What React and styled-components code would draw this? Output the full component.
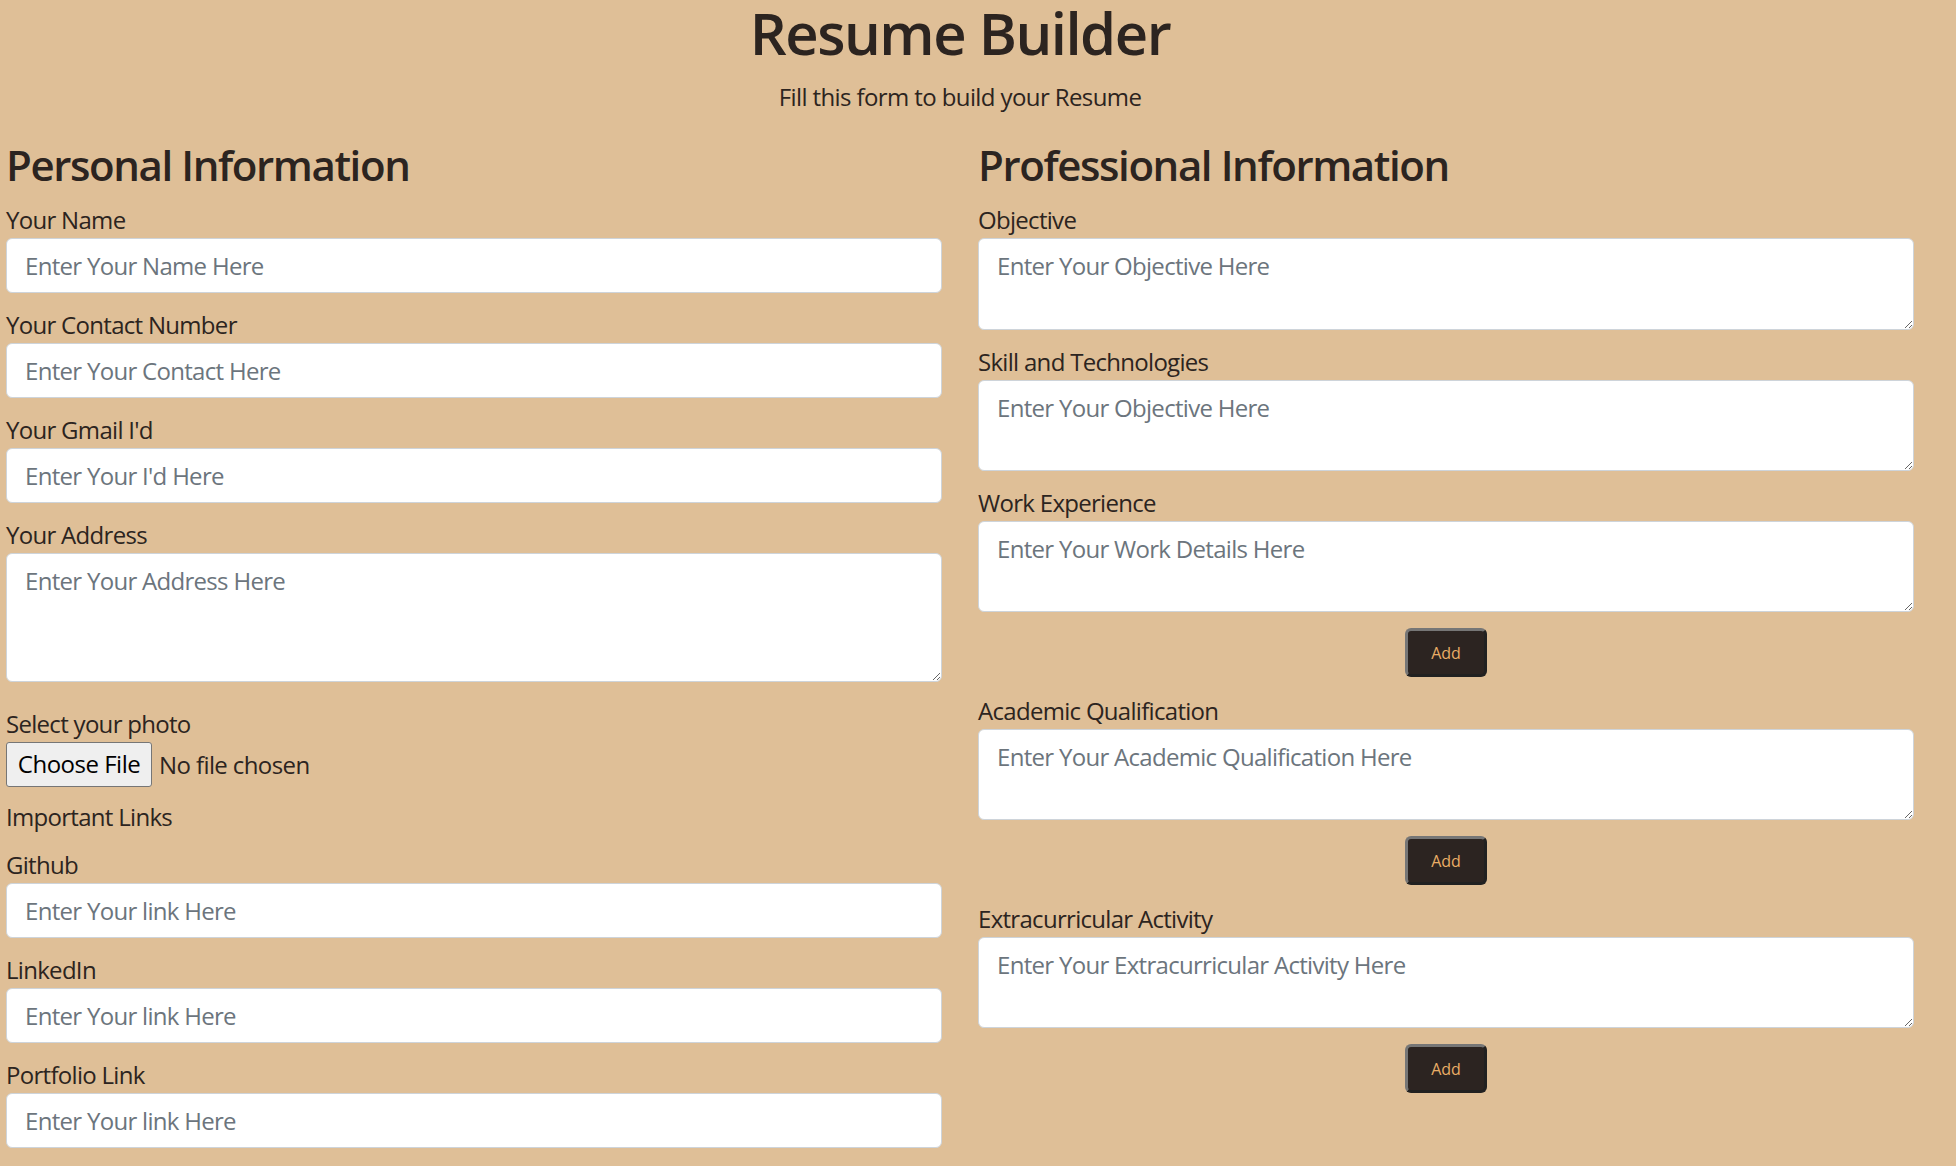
import React from 'react';
import styled, { createGlobalStyle } from 'styled-components';

const GlobalStyle = createGlobalStyle`
  body {
    margin: 0;
    background-color: #dfbf97;
    font-family: "Open Sans", "Noto Sans", sans-serif;
    color: #2c2420;
  }
  * {
    box-sizing: border-box;
  }
`;

const Page = styled.div`
  padding: 0 42px 20px 6px;
  min-height: 1166px;
`;

const Header = styled.header`
  text-align: center;
`;

const Title = styled.h1`
  margin: 0;
  font-size: 58px;
  font-weight: 600;
  line-height: 66px;
  letter-spacing: -1.5px;
`;

const Subtitle = styled.p`
  margin: 13px 0 0;
  font-size: 24px;
  line-height: 36px;
  letter-spacing: -0.6px;
`;

const Columns = styled.div`
  display: grid;
  grid-template-columns: 1fr 1fr;
  column-gap: 36px;
  margin-top: 25px;
`;

const Column = styled.section`
  display: flex;
  flex-direction: column;
`;

const SectionTitle = styled.h2`
  margin: 0 0 12px;
  font-size: 42px;
  font-weight: 600;
  line-height: 1.2;
  letter-spacing: -1.4px;
`;

const Field = styled.div`
  display: flex;
  flex-direction: column;
  margin-top: ${props => props.$gap ?? 14}px;
`;

const Label = styled.label`
  font-size: 24px;
  line-height: 36px;
  letter-spacing: -0.7px;
`;

const TextInput = styled.input`
  display: block;
  width: 100%;
  height: 55px;
  padding: 9px 18px;
  font-family: inherit;
  font-size: 24px;
  line-height: 36px;
  letter-spacing: -0.7px;
  color: #495057;
  background-color: #fff;
  border: 1px solid #ced4da;
  border-radius: 6px;
  outline: none;

  &::placeholder {
    color: #6c757d;
  }
`;

const TextArea = styled.textarea`
  display: block;
  width: 100%;
  height: ${props => props.$height}px;
  padding: 9px 18px;
  font-family: inherit;
  font-size: 24px;
  line-height: 36px;
  letter-spacing: -0.7px;
  color: #495057;
  background-color: #fff;
  border: 1px solid #ced4da;
  border-radius: 6px;
  outline: none;
  resize: vertical;

  &::placeholder {
    color: #6c757d;
  }
`;

const FileRow = styled.div`
  display: flex;
  align-items: center;
  gap: 7px;
`;

const FileButton = styled.button`
  width: 146px;
  height: 45px;
  padding: 0 0 2px;
  font-family: inherit;
  font-size: 24px;
  letter-spacing: -0.5px;
  color: #000;
  background-color: #efefef;
  border: 1px solid #767676;
  border-radius: 3px;
`;

const FileStatus = styled.span`
  font-size: 24px;
  letter-spacing: -0.6px;
  color: #2c2420;
`;

const AddRow = styled.div`
  display: flex;
  justify-content: center;
  margin: 16px 0;
`;

const AddButton = styled.button`
  width: 82px;
  height: 49px;
  padding: 0;
  font-family: inherit;
  font-size: 16px;
  color: #e9ad66;
  background-color: #2c2421;
  border: 3px outset #767676;
  border-radius: 6px;
  cursor: pointer;
`;

const personalFields = [
  { label: 'Your Name', placeholder: 'Enter Your Name Here' },
  { label: 'Your Contact Number', placeholder: 'Enter Your Contact Here' },
  { label: "Your Gmail I'd", placeholder: "Enter Your I'd Here" },
];

const linkFields = [
  { label: 'Github', gap: 12 },
  { label: 'LinkedIn' },
  { label: 'Portfolio Link' },
];

const App = () => {
  return (
    <>
      <GlobalStyle />
      <Page>
        <Header>
          <Title>Resume Builder</Title>
          <Subtitle>Fill this form to build your Resume</Subtitle>
        </Header>

        <Columns>
          <Column>
            <SectionTitle>Personal Information</SectionTitle>
            {personalFields.map((field, i) => (
              <Field key={field.label} $gap={i === 0 ? 0 : 14}>
                <Label>{field.label}</Label>
                <TextInput type="text" placeholder={field.placeholder} />
              </Field>
            ))}
            <Field>
              <Label>Your Address</Label>
              <TextArea $height={129} placeholder="Enter Your Address Here" />
            </Field>
            <Field $gap={24}>
              <Label>Select your photo</Label>
              <FileRow>
                <FileButton type="button">Choose File</FileButton>
                <FileStatus>No file chosen</FileStatus>
              </FileRow>
            </Field>
            <Field $gap={12}>
              <Label as="div">Important Links</Label>
            </Field>
            {linkFields.map(field => (
              <Field key={field.label} $gap={field.gap}>
                <Label>{field.label}</Label>
                <TextInput type="text" placeholder="Enter Your link Here" />
              </Field>
            ))}
          </Column>

          <Column>
            <SectionTitle>Professional Information</SectionTitle>
            <Field $gap={0}>
              <Label>Objective</Label>
              <TextArea $height={92} placeholder="Enter Your Objective Here" />
            </Field>
            <Field>
              <Label>Skill and Technologies</Label>
              <TextArea $height={91} placeholder="Enter Your Objective Here" />
            </Field>
            <Field>
              <Label>Work Experience</Label>
              <TextArea $height={91} placeholder="Enter Your Work Details Here" />
            </Field>
            <AddRow>
              <AddButton type="button">Add</AddButton>
            </AddRow>
            <Field $gap={0}>
              <Label>Academic Qualification</Label>
              <TextArea $height={91} placeholder="Enter Your Academic Qualification Here" />
            </Field>
            <AddRow>
              <AddButton type="button">Add</AddButton>
            </AddRow>
            <Field $gap={0}>
              <Label>Extracurricular Activity</Label>
              <TextArea $height={91} placeholder="Enter Your Extracurricular Activity Here" />
            </Field>
            <AddRow>
              <AddButton type="button">Add</AddButton>
            </AddRow>
          </Column>
        </Columns>
      </Page>
    </>
  );
};

export default App;
